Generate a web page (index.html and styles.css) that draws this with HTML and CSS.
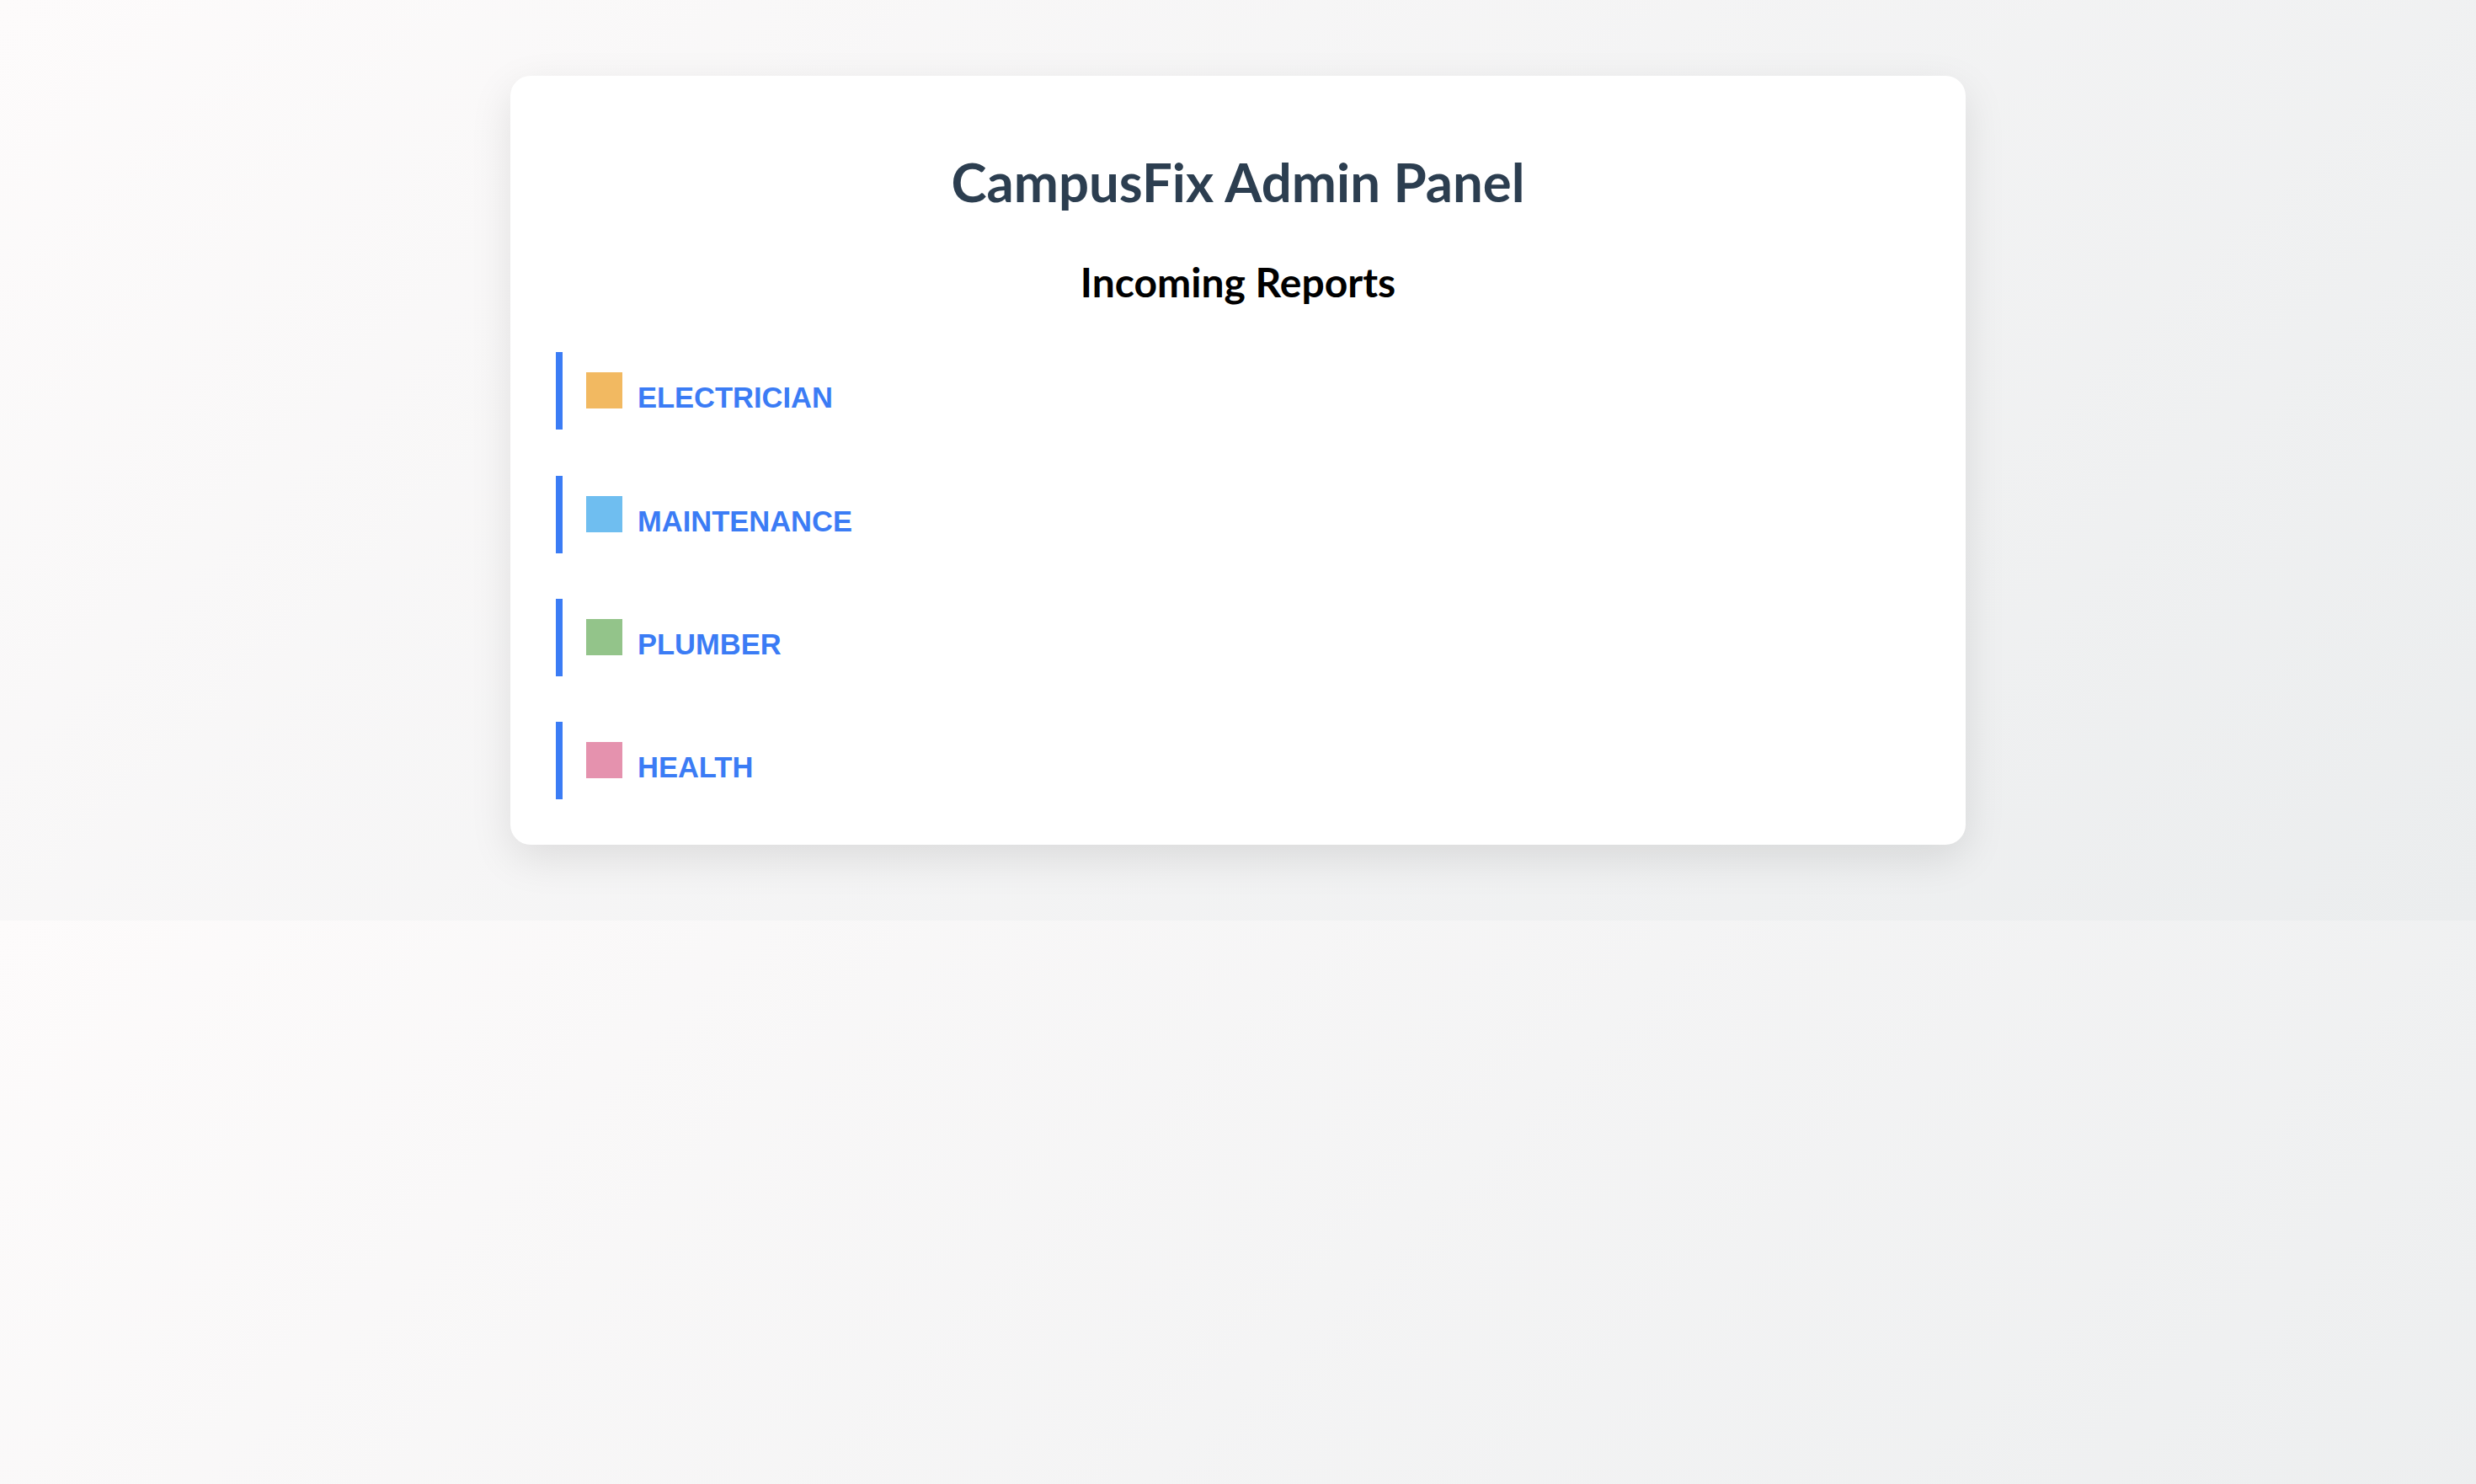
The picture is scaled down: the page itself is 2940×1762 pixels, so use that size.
FILE: index.html
```html
<!DOCTYPE html>
<html lang="en">
<head>
<meta charset="utf-8">
<title>CampusFix Admin Panel</title>
<link rel="stylesheet" href="styles.css">
</head>
<body>
  <main class="card">
    <h1 class="title">CampusFix Admin Panel</h1>
    <h2 class="subtitle">Incoming Reports</h2>
    <ul class="reports">
      <li class="report"><span class="swatch swatch-electrician"></span><span class="label">ELECTRICIAN</span></li>
      <li class="report"><span class="swatch swatch-maintenance"></span><span class="label">MAINTENANCE</span></li>
      <li class="report"><span class="swatch swatch-plumber"></span><span class="label">PLUMBER</span></li>
      <li class="report"><span class="swatch swatch-health"></span><span class="label">HEALTH</span></li>
    </ul>
  </main>
</body>
</html>
```

FILE: styles.css
```css
html {
  margin: 0;
}

body {
  margin: 0;
  padding: 90px 0;
  background: linear-gradient(135deg, #fdfbfb 0%, #ebedee 100%);
  font-family: "Liberation Sans", Arial, sans-serif;
}

.card {
  box-sizing: border-box;
  width: 1728px;
  margin: 0 auto;
  padding: 0 54px 54px 54px;
  background: #ffffff;
  border-radius: 24px;
  box-shadow: 0 16px 50px rgba(0, 0, 0, 0.1);
}

.title {
  margin: 0;
  padding-top: 88px;
  font-family: Lato, "Open Sans", sans-serif;
  font-weight: 700;
  font-size: 63.5px;
  line-height: 76.8px;
  color: #2c3e50;
  text-align: center;
}

.subtitle {
  margin: 51px 0 0 0;
  font-family: Lato, "Open Sans", sans-serif;
  font-weight: 700;
  font-size: 48px;
  line-height: 57.6px;
  color: #000000;
  text-align: center;
}

.reports {
  list-style: none;
  margin: 55px 0 0 0;
  padding: 0;
  display: flex;
  flex-direction: column;
  gap: 54.3px;
}

.report {
  box-sizing: border-box;
  height: 92px;
  padding: 24px 0 25px 28px;
  border-left: 8px solid #3b7cf5;
  display: flex;
  align-items: flex-end;
  align-self: flex-start;
}

.swatch {
  display: block;
  width: 43px;
  height: 43px;
  margin-right: 18px;
}

.swatch-electrician { background: #f2b961; }
.swatch-maintenance { background: #6fbef0; }
.swatch-plumber { background: #93c48a; }
.swatch-health { background: #e592ae; }

.label {
  display: block;
  font-family: "Liberation Sans", Arial, sans-serif;
  font-weight: 700;
  font-size: 34.5px;
  line-height: 26px;
  color: #3b7cf5;
}
```
